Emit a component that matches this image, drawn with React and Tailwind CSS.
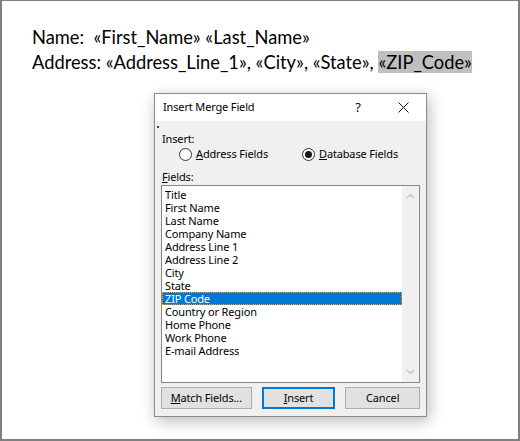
import React from 'react';

const FIELDS = [
  'Title',
  'First Name',
  'Last Name',
  'Company Name',
  'Address Line 1',
  'Address Line 2',
  'City',
  'State',
  'ZIP Code',
  'Country or Region',
  'Home Phone',
  'Work Phone',
  'E-mail Address',
];

const uiFont = { fontFamily: '"Noto Sans", "Open Sans", sans-serif' };

function Radio({ checked, children }) {
  return (
    <span className="flex items-center">
      <span className="flex h-[13px] w-[13px] items-center justify-center rounded-full border border-[#333] bg-white">
        {checked && <span className="h-[7px] w-[7px] rounded-full bg-[#1a1a1a]" />}
      </span>
      <span className="ml-[4px]">{children}</span>
    </span>
  );
}

function Chevron({ up }) {
  return (
    <svg width="9" height="6" viewBox="0 0 9 6">
      <polyline
        points={up ? '1,5 4.5,1.5 8,5' : '1,1 4.5,4.5 8,1'}
        fill="none"
        stroke="#c2c2c2"
        strokeWidth="1.5"
      />
    </svg>
  );
}

function Button({ children, focused, width }) {
  return (
    <button
      className={
        'flex h-[22px] items-center justify-center bg-[#e1e1e1] text-black ' +
        (focused ? 'border-2 border-[#0078d7] ' : 'border border-[#adadad] ') +
        width
      }
    >
      {children}
    </button>
  );
}

export default function App() {
  return (
    <div className="relative h-[441px] w-[520px] overflow-hidden border-x-2 border-t border-b-2 border-[#7f7f7f] bg-white">
      {/* document body */}
      <div
        className="whitespace-pre pl-[30px] pt-[24px] text-[18.3px] leading-[25px] text-black"
        style={{ fontFamily: 'Lato, "Liberation Sans", sans-serif' }}
      >
        <div>Name:  «First_Name» «Last_Name»</div>
        <div>
          Address: «Address_Line_1», «City», «State», <span className="bg-[#bfbfbf]">«ZIP_Code»</span>
        </div>
      </div>

      {/* merge field dialog */}
      <div
        className="absolute left-[152px] top-[92px] w-[273px] border border-[#8a8a8a] bg-[#f0f0f0] text-[11px] tracking-[-0.15px] text-black shadow-[2px_4px_14px_rgba(0,0,0,0.28)]"
        style={uiFont}
      >
        <div className="flex h-[27px] items-center bg-white">
          <span className="flex-1 pl-[8px] text-[11px]">Insert Merge Field</span>
          <span className="flex w-[46px] justify-center text-[13px]">?</span>
          <span className="flex w-[45px] justify-center">
            <svg width="11" height="11" viewBox="0 0 11 11">
              <path d="M0.5 0.5 L10.5 10.5 M10.5 0.5 L0.5 10.5" stroke="#111" strokeWidth="1" />
            </svg>
          </span>
        </div>

        <div className="relative px-[6px] pb-[7px] pt-[10px]">
          <span className="absolute left-[2px] top-[5px] h-[2px] w-[2px] bg-[#444]" />
          <div className="h-[15px] pl-[1px] leading-[15px]">Insert:</div>
          <div className="flex h-[17px] items-center pl-[18px]">
            <div className="w-[123px]">
              <Radio>
                <u>A</u>ddress Fields
              </Radio>
            </div>
            <Radio checked>
              <u>D</u>atabase Fields
            </Radio>
          </div>
          <div className="mt-[6px] h-[15px] pl-[1px] leading-[15px]">
            <u>F</u>ields:
          </div>

          <div className="mt-[1px] flex h-[198px] border border-[#828790] bg-white">
            <ul className="flex-1 pt-[2px]">
              {FIELDS.map((f) =>
                f === 'ZIP Code' ? (
                  <li
                    key={f}
                    className="h-[13px] border border-dotted border-[#f0a030] bg-[#0078d7] pl-[2px] leading-[11px] text-white"
                  >
                    {f}
                  </li>
                ) : (
                  <li key={f} className="h-[13px] pl-[3px] leading-[13px]">
                    {f}
                  </li>
                )
              )}
            </ul>
            <div className="flex w-[17px] flex-col items-center justify-between bg-[#f0f0f0] py-[7px]">
              <Chevron up />
              <Chevron />
            </div>
          </div>

          <div className="mt-[4px] flex gap-[10px]">
            <Button width="w-[91px]">
              <span>
                <u>M</u>atch Fields...
              </span>
            </Button>
            <Button focused width="w-[74px]">
              <span>
                <u>I</u>nsert
              </span>
            </Button>
            <Button width="w-[75px]">Cancel</Button>
          </div>
        </div>
      </div>
    </div>
  );
}
